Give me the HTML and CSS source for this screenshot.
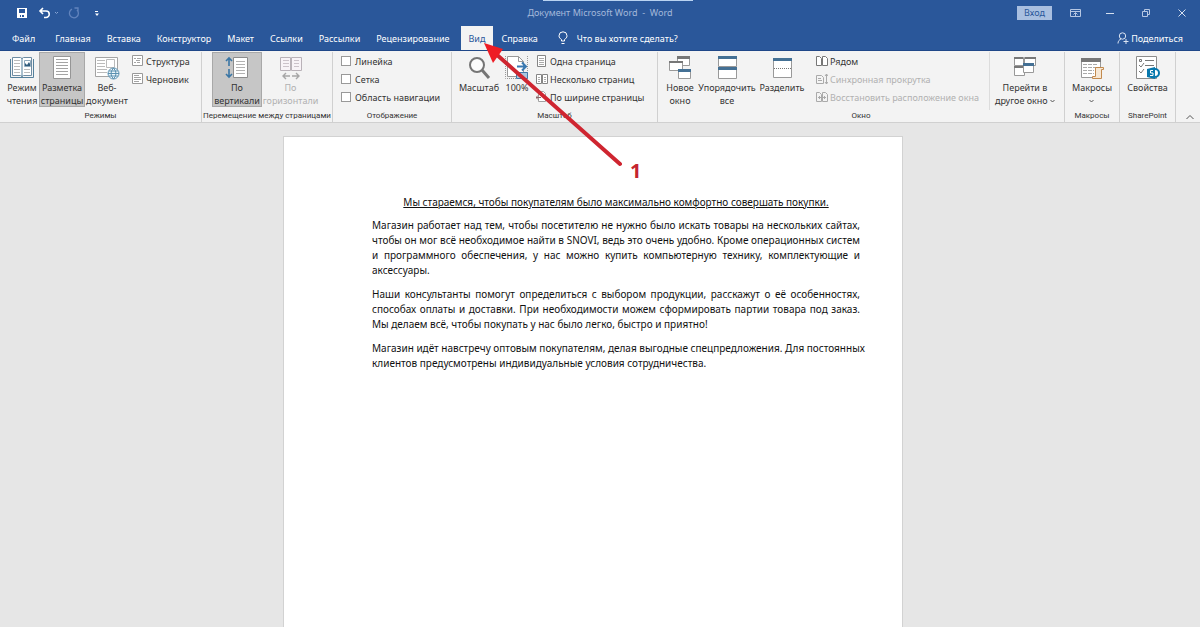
FILE: index.html
```html
<!DOCTYPE html>
<html lang="ru">
<head>
<meta charset="utf-8">
<title>Документ Microsoft Word - Word</title>
<link rel="stylesheet" href="styles.css">
</head>
<body>
<header class="header">
  <div class="titlebar">
    <div class="quick">
      <button class="plain" aria-label="Сохранить"><svg width="12" height="12" viewBox="0 0 12 12"><path fill="#fff" fill-rule="evenodd" d="M1 1h10v10H1zM3 2v4h6V2zM4 8v2h1V8zM6 8v2h2V8z"/></svg></button>
      <button class="plain undo" aria-label="Отменить"><svg width="22" height="12" viewBox="0 0 22 12"><path fill="none" stroke="#fff" stroke-width="1.6" d="M5 1 2 4l3 3M2 4h6a3 3 0 0 1 0 6.500H6"/><path fill="none" stroke="#86a3d2" d="m17 5 1.500 1.500L20 5"/></svg></button>
      <button class="plain" aria-label="Повторить" disabled><svg width="12" height="12" viewBox="0 0 12 12"><path fill="none" stroke="#6284bd" stroke-width="1.300" d="M4 2.200a4.500 4.500 0 1 0 5 .8M6.500 1H10v3.500"/></svg></button>
      <button class="plain more" aria-label="Настройка панели"><svg width="6" height="8" viewBox="0 0 6 8"><path fill="#fff" d="M1 2h3v1H1zM1 4.500h4L3 7z"/></svg></button>
    </div>
    <div class="doc-title">Документ Microsoft Word&nbsp; -&nbsp; Word</div>
    <div class="window-tools">
      <button class="login">Вход</button>
      <button class="plain" aria-label="Параметры ленты"><svg width="12" height="10" viewBox="0 0 12 10"><path fill="none" stroke="#b6c7e3" d="M.5 1.500h10v7H.5zM.5 3.500h10M5.500 8V5M3.500 6.500l2-2 2 2"/></svg></button>
      <button class="plain" aria-label="Свернуть"><svg width="10" height="10" viewBox="0 0 10 10"><path stroke="#d5dfef" d="M1 5.500h8"/></svg></button>
      <button class="plain" aria-label="Восстановить"><svg width="10" height="10" viewBox="0 0 10 10"><path fill="none" stroke="#b6c7e3" d="M1.500 3.500h5v5h-5zM3.500 3V1.500h5v5H7"/></svg></button>
      <button class="plain" aria-label="Закрыть"><svg width="10" height="10" viewBox="0 0 10 10"><path stroke="#d5dfef" d="m1.500 1.500 7 7m0-7-7 7"/></svg></button>
    </div>
    <div class="progress"></div>
  </div>
  <nav class="tabs">
    <a class="tab file" href="#">Файл</a>
    <a class="tab" href="#">Главная</a>
    <a class="tab" href="#">Вставка</a>
    <a class="tab" href="#">Конструктор</a>
    <a class="tab" href="#">Макет</a>
    <a class="tab" href="#">Ссылки</a>
    <a class="tab" href="#">Рассылки</a>
    <a class="tab" href="#">Рецензирование</a>
    <a class="tab active" href="#" aria-current="page">Вид</a>
    <a class="tab" href="#">Справка</a>
    <a class="tab tell" href="#"><svg width="10" height="14" viewBox="0 0 10 14"><path fill="none" stroke="#fff" d="M3.500 10V8.500C2 7.500 1 6.500 1 4.800a4 4 0 0 1 8 0C9 6.500 8 7.500 6.500 8.500V10zM3.500 12.500h3"/></svg>Что вы хотите сделать?</a>
    <a class="tab share" href="#"><svg width="12" height="12" viewBox="0 0 12 12"><circle cx="5.500" cy="4" r="3.200" fill="none" stroke="#dce5f3"/><path fill="none" stroke="#dce5f3" d="M1 11.500C1 9 2.500 7.500 4 7M6.500 9.500h5M9 7v5"/></svg>Поделиться</a>
  </nav>
</header>

<section class="ribbon" aria-label="Вид">
  <div class="group modes">
    <div class="body">
      <button class="big read"><svg width="26" height="26" viewBox="0 0 26 26"><path fill="#fff" stroke="#6e8ca3" d="M3.500 3.500h8l1.500 1 1.500-1h8v18h-8l-1.500 1-1.500-1h-8z"/><path stroke="#54809c" d="M1.500 5v18.500h23V5M13 4v19" fill="none"/><path stroke="#bbb" d="M5 6.500h6m-6 3h6m-6 3h6m-6 3h6m-6 3h6m4 -3h6m-6 3h6"/><path fill="none" stroke="#8fa9bb" d="M15.500 6.500h6v6h-6z"/><path fill="#315c7c" d="M16 12V9l2 2 2-3 1 2v2z"/></svg><span>Режим<br>чтения</span></button>
      <button class="big layout chosen" aria-pressed="true"><svg width="26" height="26" viewBox="0 0 26 26"><path fill="#fff" stroke="#969696" d="M4.500 2.500h17v22h-17z"/><path stroke="#a4a4a4" d="M7 5.500h12M7 8.500h12M7 11.500h12M7 14.500h12M7 17.500h12M7 20.500h12"/></svg><span>Разметка<br>страницы</span></button>
      <button class="big web"><svg width="26" height="26" viewBox="0 0 26 26"><path fill="#fff" stroke="#a4a4a4" d="M1.500 3.500h22v19h-22z"/><path stroke="#bbb" d="M3 6.500h8m-8 3h8m-8 3h8m-8 3h10m-10 3h10"/><path fill="#fff" stroke="#bbb" d="M12.500 5.500h8v8h-8z"/><circle cx="19.500" cy="19.500" r="5.500" fill="#edf6fb" stroke="#5b91b1"/><path fill="none" stroke="#5b91b1" d="M14 19.500h11M15 17h9M15 22h9M19.500 14q-5 5.500 0 11q5-5.500 0-11"/></svg><span>Веб-<br>документ</span></button>
      <div class="stack">
        <button class="small"><svg width="12" height="12" viewBox="0 0 12 12"><path fill="#fff" stroke="#999" d="M.5 .5h10v10H.5z"/><path stroke="#a4a4a4" d="M2 3.500h2m1 0h4M4 5.500h4M2 7.500h2m1 0h3"/></svg>Структура</button>
        <button class="small"><svg width="12" height="12" viewBox="0 0 12 12"><path fill="#fff" stroke="#999" d="M.5 .5h10v10H.5z"/><path stroke="#a4a4a4" d="M2 2.500h5M2 4.500h7M2 6.500h7M2 8.500h5"/></svg>Черновик</button>
      </div>
    </div>
    <div class="caption">Режимы</div>
  </div>

  <div class="group moving">
    <div class="body">
      <button class="big vertical chosen" aria-pressed="true"><svg width="26" height="26" viewBox="0 0 26 26"><path fill="#fff" stroke="#8c8c8c" d="M9.500 3.500h14v20h-14z"/><path stroke="#b2b2b2" d="M12 7.500h9m-9 3h9m-9 3h9m-9 3h9m-9 3h9"/><path fill="none" stroke="#3a76a5" stroke-width="1.600" d="M5 4v8M2 7l3-3 3 3M5 15v8M2 20l3 3 3-3"/></svg><span>По<br>вертикали</span></button>
      <button class="big horizontal" disabled><svg width="26" height="26" viewBox="0 0 26 26"><path fill="#f8f3f7" stroke="#b9b2b8" d="M2.500 3.500h10v13h-10zM13.500 3.500h10v13h-10z"/><path stroke="#ccc3ca" d="M5 6.500h6m-6 3h6m-6 3h6M16 6.500h5m-5 3h5m-5 3h5"/><path fill="none" stroke="#a6a6a6" stroke-width="1.400" d="M12 22H5m3-3-3 3 3 3M14 22h7m-3-3 3 3-3 3"/></svg><span>По<br>горизонтали</span></button>
    </div>
    <div class="caption">Перемещение между страницами</div>
  </div>

  <div class="group display">
    <div class="body">
      <div class="stack">
        <label class="small"><input type="checkbox">Линейка</label>
        <label class="small"><input type="checkbox">Сетка</label>
        <label class="small"><input type="checkbox">Область навигации</label>
      </div>
    </div>
    <div class="caption">Отображение</div>
  </div>

  <div class="group zooming">
    <div class="body">
      <button class="big zoom"><svg width="26" height="26" viewBox="0 0 26 26"><circle cx="11" cy="11" r="7" fill="#fcfcfc" stroke="#757575" stroke-width="2"/><path stroke="#757575" stroke-width="3" d="m16 16 7 8"/></svg><span>Масштаб</span></button>
      <button class="big percent"><svg width="26" height="26" viewBox="0 0 26 26"><path fill="#fff" stroke="#999" d="M3.500 2.500h11l5 5v15h-16z"/><path fill="none" stroke="#999" d="M14.500 2.500v5h5"/><path fill="none" stroke="#999" stroke-dasharray="1 1" d="M1.500 2v22.500h22V2"/><path fill="none" stroke="#3979b1" stroke-width="2" d="M13 12.500h8m-3-4 4 4-4 4"/><path fill="#aac7df" stroke="#4378a8" d="M12.500 18.500h11v6h-11z"/></svg><span>100%</span></button>
      <div class="stack">
        <button class="small"><svg width="12" height="12" viewBox="0 0 12 12"><path fill="#fff" stroke="#858585" d="M1.500 .5h8v11h-8z"/><path stroke="#aaa" d="M3 3.500h5m-5 2h5m-5 2h5m-5 2h5"/></svg>Одна страница</button>
        <button class="small"><svg width="12" height="12" viewBox="0 0 12 12"><path fill="#fff" stroke="#858585" d="M.5 1.500h5v9h-5zM6.500 1.500h5v9h-5z"/><path stroke="#aaa" d="M2 4.500h2m-2 2h2m-2 2h2m4-4h2m-2 2h2m-2 2h2"/></svg>Несколько страниц</button>
        <button class="small"><svg width="12" height="12" viewBox="0 0 12 12"><path fill="#fff" stroke="#a2a2a2" d="M2.500 .5h5l2 2v8h-7z"/><path fill="none" stroke="#8b6666" d="M0 6.500h5M2 4.500l-2 2 2 2"/></svg>По ширине страницы</button>
      </div>
    </div>
    <div class="caption">Масштаб</div>
  </div>

  <div class="group windows">
    <div class="body">
      <button class="big new"><svg width="26" height="26" viewBox="0 0 26 26"><path fill="#fff" stroke="#999" d="M10.500 2.500h12v9h-12z"/><path fill="#777" d="M10 2h13v3H10z"/><path fill="#fff" stroke="#999" d="M2.500 7.500h13v9h-13z"/><path fill="#777" d="M2 7h14v2H2z"/><path fill="#fff" stroke="#999" d="M11.500 15.500h12v9h-12z"/><path fill="#447094" d="M11 15h13v3H11z"/></svg><span>Новое<br>окно</span></button>
      <button class="big arrange"><svg width="26" height="26" viewBox="0 0 26 26"><path fill="#fff" stroke="#999" d="M4.500 2.500h18v10h-18zM4.500 14.500h18v10h-18z"/><path fill="#447094" d="M4 2h19v3H4zM4 13h19v3H4z"/></svg><span>Упорядочить<br>все</span></button>
      <button class="big split"><svg width="26" height="26" viewBox="0 0 26 26"><path fill="#fff" stroke="#999" d="M4.500 4.500h18v19h-18z"/><path fill="#447094" d="M4 4h19v3H4z"/><path stroke="#777" stroke-dasharray="1 1" d="M5 14.500h17"/></svg><span>Разделить</span></button>
      <div class="stack">
        <button class="small"><svg width="12" height="12" viewBox="0 0 12 12"><path fill="#fff" stroke="#777" d="M.5 1.500h3l2 2v7h-5zM6.500 1.500h3l2 2v7h-5z"/></svg>Рядом</button>
        <button class="small" disabled><svg width="12" height="12" viewBox="0 0 12 12"><path fill="#f4f4f4" stroke="#aaa" d="M.5 2.500h5l2 2v6h-7z"/><path fill="none" stroke="#aaa" d="M2 5.500h3m-3 2h4M10.500 1v10M9 3l1.500-2L12 3M9 9l1.500 2L12 9"/></svg>Синхронная прокрутка</button>
        <button class="small" disabled><svg width="12" height="12" viewBox="0 0 12 12"><path fill="none" stroke="#aaa" d="M.5 1.500h3l2 2v7h-5zM6.500 1.500h3l2 2v7h-5zM2 6.500h3m2 0h3M3.500 5v3m5-3v3"/></svg>Восстановить расположение окна</button>
      </div>
      <button class="big switch"><svg width="26" height="26" viewBox="0 0 26 26"><path fill="#fff" stroke="#999" d="M2.500 3.500h9v8h-9zM12.500 3.500h11v8h-11zM2.500 12.500h10v9h-10z"/><path fill="#777" d="M2 3h9v2H2zM13 3h11v2H13zM2 12h9v2H2z"/><path fill="#fff" stroke="#999" d="M11.500 9.500h10v9h-10z"/><path fill="#447094" d="M11 9h11v3H11z"/></svg><span>Перейти в<br>другое окно <svg class="drop" width="5" height="5" viewBox="0 0 5 5"><path fill="none" stroke="#555" d="m.5 1 2 2 2-2"/></svg></span></button>
    </div>
    <div class="caption">Окно</div>
  </div>

  <div class="group macros">
    <div class="body">
      <button class="big"><svg width="26" height="26" viewBox="0 0 26 26"><path fill="#fff" stroke="#999" d="M2.500 4.500h19v19h-19z"/><path fill="#777" d="M2 4h20v4H2z"/><path stroke="#aaa" stroke-dasharray="4 1" d="M4 10.500h15m-15 3h15m-15 3h11m-11 3h11"/><path fill="#f7e8d5" stroke="#c28a4e" d="M16.500 13.500h8v2h-2v9h-9v-2h3z"/></svg><span>Макросы<br><svg class="drop" width="5" height="5" viewBox="0 0 5 5"><path fill="none" stroke="#555" d="m.5 1 2 2 2-2"/></svg></span></button>
    </div>
    <div class="caption">Макросы</div>
  </div>

  <div class="group sharepoint">
    <div class="body">
      <button class="big"><svg width="26" height="26" viewBox="0 0 26 26"><path fill="#fff" stroke="#8c8c8c" d="M2.500 2.500h20v22h-20z"/><path fill="none" stroke="#777" d="M5.500 5.500h2v2h-2zM11 6.500h9M11 11.500h9M5 11l2 2 3-4M5 17l2 2 3-4"/><circle cx="21" cy="19" r="4" fill="#fff" stroke="#0878ad" stroke-width="2"/><path fill="#0878ad" d="m13 15 8-2v12l-8-2z"/><path fill="none" stroke="#fff" d="M19 16.500h-2.500v2.500H19v2.500h-3"/></svg><span>Свойства</span></button>
    </div>
    <div class="caption">SharePoint</div>
  </div>
  <button class="plain collapse" aria-label="Свернуть ленту"><svg width="10" height="6" viewBox="0 0 10 6"><path fill="none" stroke="#555" d="m1.500 5 3.500-3.500L8.500 5"/></svg></button>
</section>

<main class="workspace">
  <article class="sheet">
    <h1 class="heading">Мы стараемся, чтобы покупателям было максимально комфортно совершать покупки.</h1>
    <p>Магазин работает над тем, чтобы посетителю не нужно было искать товары на нескольких сайтах, чтобы он мог всё необходимое найти в SNOVI, ведь это очень удобно. Кроме операционных систем и программного обеспечения, у нас можно купить компьютерную технику, комплектующие и аксессуары.</p>
    <p>Наши консультанты помогут определиться с выбором продукции, расскажут о её особенностях, способах оплаты и доставки. При необходимости можем сформировать партии товара под заказ. Мы делаем всё, чтобы покупать у нас было легко, быстро и приятно!</p>
    <p><span class="line">Магазин идёт навстречу оптовым покупателям, делая выгодные спецпредложения. Для постоянных</span> клиентов предусмотрены индивидуальные условия сотрудничества.</p>
  </article>
</main>

<div class="pointer">
  <svg width="140" height="124" viewBox="0 0 140 124"><path stroke="#cf2530" stroke-width="4" stroke-linecap="round" d="m12 11 124 110"/><path fill="#ee1c24" d="m0 0 19 6-5 7-5 7z"/></svg>
  <span class="step">1</span>
</div>
</body>
</html>
```
FILE: styles.css
```css
* { box-sizing: border-box; }

body {
  margin: 0;
  min-height: 100vh;
  display: flex;
  flex-direction: column;
  background: #e6e6e6;
  color: #333;
  font-family: "Noto Sans", "Open Sans", sans-serif;
  font-size: 9px;
}

button {
  margin: 0;
  padding: 0;
  border: 0;
  background: none;
  color: inherit;
  font: inherit;
}

a { color: inherit; text-decoration: none; }
svg { flex: none; }

.plain { display: flex; }

/* Title bar and tabs */
.header {
  background: #2a579a;
  color: #fff;
  border-bottom: 1px solid #1f4788;
}

.titlebar {
  position: relative;
  display: grid;
  grid-template-columns: 1fr auto 1fr;
  align-items: center;
  height: 26px;
}

.quick { display: flex; align-items: center; padding-left: 16px; gap: 8px; }
.undo { padding-left: 2px; }
.more { padding-left: 6px; }
.doc-title { color: #a5b9da; line-height: 12px; }

.window-tools {
  display: flex;
  align-items: center;
  justify-content: flex-end;
  gap: 26px;
  padding-right: 13px;
}

.login {
  width: 35px;
  height: 14px;
  margin-right: -8px;
  background: #a9bfe0;
  color: #2a579a;
  line-height: 14px;
}

.login + .plain { margin-right: -3px; }

.progress {
  position: absolute;
  top: 0;
  left: 543px;
  width: 150px;
  height: 1px;
  background: #b9d3f2;
}

.tabs { display: flex; height: 24px; padding-left: 4px; }

.tab {
  display: flex;
  align-items: center;
  padding: 0 8px;
  white-space: nowrap;
}

.file { margin-right: 4px; }
.active { margin-left: 3px; background: #f3f3f3; color: #2a579a; }
.tell { gap: 9px; margin-left: 4px; }
.share { gap: 2px; margin-left: auto; padding-right: 17px; }

/* Ribbon */
.ribbon {
  display: flex;
  height: 72px;
  background: #f3f3f3;
  border-bottom: 1px solid #d0d0d0;
}

.group {
  display: flex;
  flex-direction: column;
  margin: 1px 0 0;
  border-right: 1px solid #d0d0d0;
}

.body { display: flex; flex: none; height: 58px; }

.caption {
  color: #333;
  font-family: Roboto, "Noto Sans", sans-serif;
  font-size: 8px;
  line-height: 12px;
  text-align: center;
  white-space: nowrap;
}

.big {
  display: flex;
  flex-direction: column;
  align-items: center;
  height: 55px;
  padding-top: 2px;
  line-height: 13px;
  white-space: nowrap;
}

.big > span { display: block; padding-top: 1px; }
.chosen { background: #c6c6c6; box-shadow: inset 0 0 0 1px #a8a8a8; }
.big:disabled, .small:disabled { color: #b1b1b1; }
.drop { vertical-align: middle; }

.stack { display: flex; flex-direction: column; }

.small {
  display: flex;
  align-items: center;
  gap: 2px;
  height: 18px;
  white-space: nowrap;
}

.small input {
  appearance: none;
  width: 10px;
  height: 10px;
  margin: 0 2px 0 0;
  border: 1px solid #999;
  background: #fff;
}

.modes { width: 202px; padding-left: 5px; }
.read { width: 34px; }
.layout { width: 46px; }
.web { width: 44px; }
.modes .stack { padding-left: 3px; }
.modes .caption { padding-right: 5px; }

.moving { width: 131px; }
.moving .body { padding-left: 10px; }
.vertical { width: 50px; }
.horizontal { width: 57px; }

.display { width: 119px; }
.display .body { padding-left: 8px; }

.zooming { width: 206px; }
.zooming .body { padding-left: 6px; }
.zoom { width: 42px; }
.percent { width: 34px; }
.zooming .stack { padding-left: 2px; }

.windows { width: 407px; }
.windows .body { padding-left: 5px; }
.new { width: 34px; }
.arrange { width: 60px; }
.split { width: 50px; }
.windows .stack {
  width: 183px;
  padding-left: 9px;
  border-right: 1px solid #dcdcdc;
}
.switch { width: 70px; }

.macros { width: 55px; }
.sharepoint { width: 56px; }
.macros .body, .sharepoint .body { justify-content: center; }

.collapse { align-items: flex-end; margin: 0 5px 2px auto; }

/* Document */
.workspace {
  flex: 1;
  display: flex;
  justify-content: center;
  padding: 13px 14px 0 0;
}

.sheet {
  width: 620px;
  padding: 58px 42px 0 88px;
  background: #fff;
  border: 1px solid #d2d2d2;
  border-bottom: 0;
  color: #111;
  font-family: "Noto Sans", "Open Sans", sans-serif;
  font-size: 10px;
  line-height: 15px;
}

.sheet p { margin: 0 0 9px; text-align: justify; }

.line {
  display: block;
  text-align-last: justify;
  white-space: nowrap;
}

.heading {
  margin: 0 0 8px;
  font-size: 10px;
  font-weight: 400;
  text-align: center;
  text-decoration: underline;
}

/* Callout arrow */
.pointer { position: absolute; top: 43px; left: 484px; display: flex; align-items: flex-end; }

.step {
  margin: 0 0 -14px 6px;
  color: #c4242f;
  font-size: 20px;
  font-weight: 700;
  line-height: 20px;
}
```
